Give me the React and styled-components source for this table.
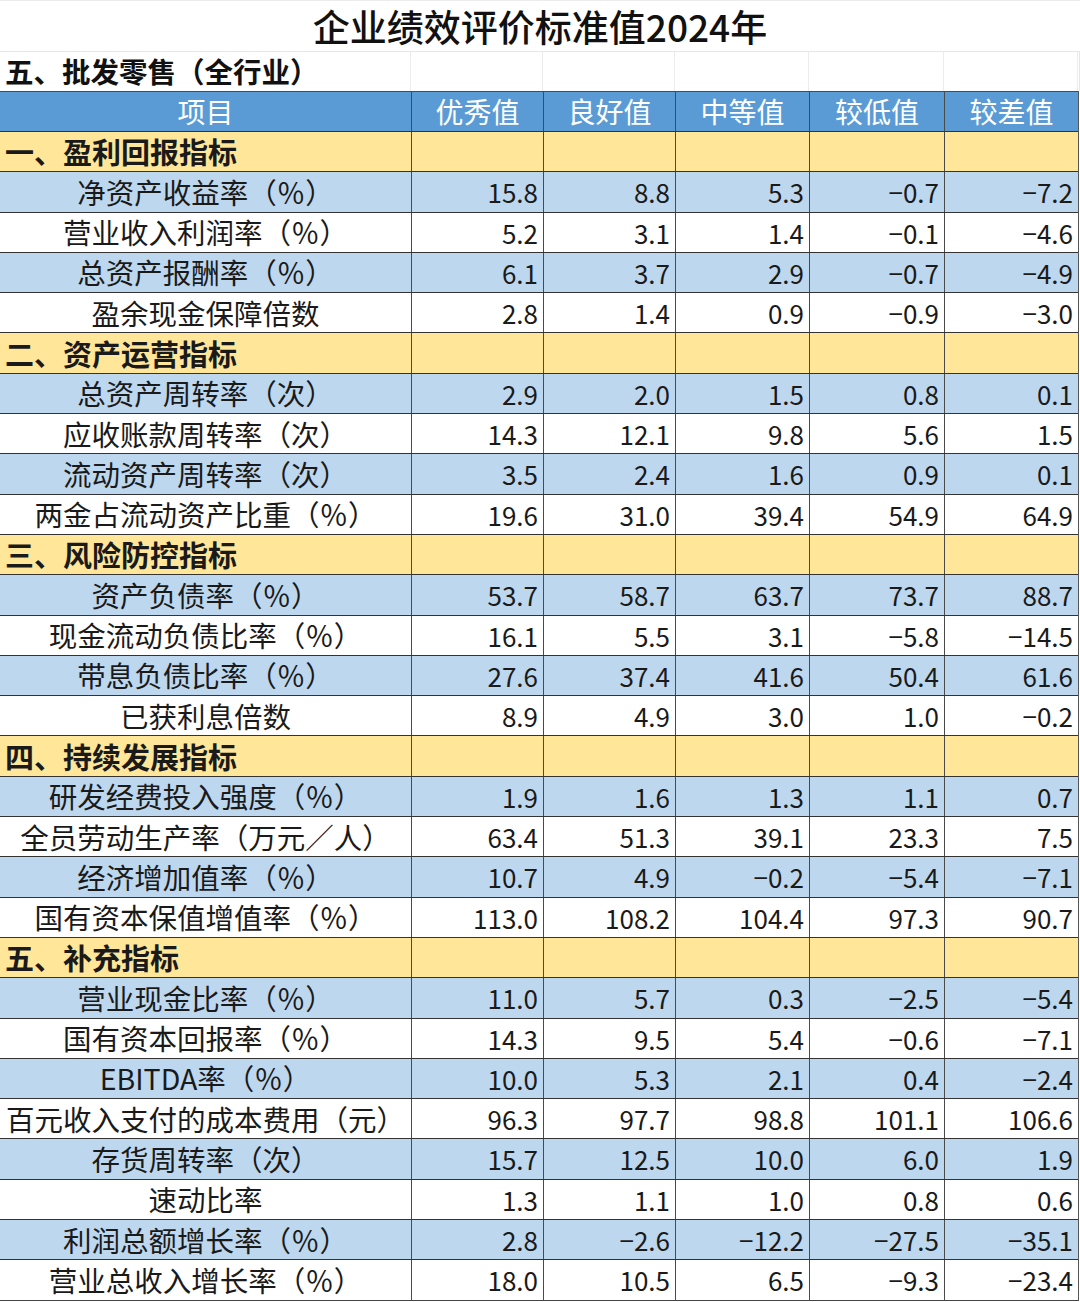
import React from "react";
import styled, { createGlobalStyle } from "styled-components";

const Global = createGlobalStyle`
  html, body { margin: 0; padding: 0; background: #ffffff; }
  body { font-family: "Noto Sans CJK SC", "Noto Sans", sans-serif; color: #111; }
`;

const COLS = "411px 132px 132px 134px 135px 134px";

const Sheet = styled.div`
  width: 1080px;
  display: flex;
  flex-direction: column;
`;

const TitleBar = styled.div`
  height: 52px;
  box-sizing: border-box;
  border-top: 1px solid #ececec;
  border-bottom: 1px solid #e6e6e6;
  display: flex;
  align-items: center;
  justify-content: center;
  font-size: 37px;
  line-height: 1.2;
  font-weight: 500;
  color: #111;
`;

const SubRow = styled.div`
  display: grid;
  grid-template-columns: ${COLS};
  height: 39px;
  box-sizing: border-box;
  border-right: 1px solid #e6e6e6;
`;

const SubCell = styled.div`
  box-sizing: border-box;
  border-right: 1px solid #ececec;
  display: flex;
  align-items: center;
  padding-left: 5px;
  font-size: 28.5px;
  line-height: 1.2;
  font-weight: 700;
  color: #111;
  white-space: nowrap;
`;

const Table = styled.div`
  width: 1078px;
  display: flex;
  flex-direction: column;
  border-left: 1px solid #333;
  border-right: 1px solid #555;
  border-bottom: 1px solid #444;
  box-sizing: content-box;
  margin-left: -1px;
`;

const bg = {
  head: "#5b9bd5",
  section: "#ffe699",
  blue: "#bdd7ee",
  white: "#ffffff",
};

const Row = styled.div`
  display: grid;
  grid-template-columns: ${COLS};
  height: ${(p) => (p.$kind === "head" ? "40px" : "40.31px")};
  box-sizing: border-box;
  border-top: 1px solid ${(p) => (p.$kind === "head" ? "#3c4d60" : "#333")};
  background: ${(p) => bg[p.$kind]};
`;

const Cell = styled.div`
  box-sizing: border-box;
  min-width: 0;
  border-left: ${(p) => (p.$first ? "none" : "1px solid #4a4a4a")};
  display: flex;
  align-items: center;
  white-space: nowrap;
  line-height: 1.2;
`;

const HeadCell = styled(Cell)`
  justify-content: center;
  color: #ffffff;
  font-size: 28px;
  font-weight: 400;
  padding-top: 1px;
`;

const SectionCell = styled(Cell)`
  justify-content: flex-start;
  padding-left: 5px;
  font-size: 29px;
  font-weight: 700;
  color: #1a1a1a;
`;

const LabelCell = styled(Cell)`
  justify-content: center;
  font-size: 28.5px;
  font-weight: 400;
  color: #1a1a1a;
`;

const NumCell = styled(Cell)`
  justify-content: flex-end;
  padding-right: 5px;
  font-size: 26px;
  font-weight: 400;
  color: #1a1a1a;
`;

const headers = ["项目", "优秀值", "良好值", "中等值", "较低值", "较差值"];

const sections = [
  {
    title: "一、盈利回报指标",
    rows: [
      ["净资产收益率（％）", "15.8", "8.8", "5.3", "−0.7", "−7.2"],
      ["营业收入利润率（％）", "5.2", "3.1", "1.4", "−0.1", "−4.6"],
      ["总资产报酬率（％）", "6.1", "3.7", "2.9", "−0.7", "−4.9"],
      ["盈余现金保障倍数", "2.8", "1.4", "0.9", "−0.9", "−3.0"],
    ],
  },
  {
    title: "二、资产运营指标",
    rows: [
      ["总资产周转率（次）", "2.9", "2.0", "1.5", "0.8", "0.1"],
      ["应收账款周转率（次）", "14.3", "12.1", "9.8", "5.6", "1.5"],
      ["流动资产周转率（次）", "3.5", "2.4", "1.6", "0.9", "0.1"],
      ["两金占流动资产比重（％）", "19.6", "31.0", "39.4", "54.9", "64.9"],
    ],
  },
  {
    title: "三、风险防控指标",
    rows: [
      ["资产负债率（％）", "53.7", "58.7", "63.7", "73.7", "88.7"],
      ["现金流动负债比率（％）", "16.1", "5.5", "3.1", "−5.8", "−14.5"],
      ["带息负债比率（％）", "27.6", "37.4", "41.6", "50.4", "61.6"],
      ["已获利息倍数", "8.9", "4.9", "3.0", "1.0", "−0.2"],
    ],
  },
  {
    title: "四、持续发展指标",
    rows: [
      ["研发经费投入强度（％）", "1.9", "1.6", "1.3", "1.1", "0.7"],
      ["全员劳动生产率（万元／人）", "63.4", "51.3", "39.1", "23.3", "7.5"],
      ["经济增加值率（％）", "10.7", "4.9", "−0.2", "−5.4", "−7.1"],
      ["国有资本保值增值率（％）", "113.0", "108.2", "104.4", "97.3", "90.7"],
    ],
  },
  {
    title: "五、补充指标",
    rows: [
      ["营业现金比率（％）", "11.0", "5.7", "0.3", "−2.5", "−5.4"],
      ["国有资本回报率（％）", "14.3", "9.5", "5.4", "−0.6", "−7.1"],
      ["EBITDA率（％）", "10.0", "5.3", "2.1", "0.4", "−2.4"],
      ["百元收入支付的成本费用（元）", "96.3", "97.7", "98.8", "101.1", "106.6"],
      ["存货周转率（次）", "15.7", "12.5", "10.0", "6.0", "1.9"],
      ["速动比率", "1.3", "1.1", "1.0", "0.8", "0.6"],
      ["利润总额增长率（％）", "2.8", "−2.6", "−12.2", "−27.5", "−35.1"],
      ["营业总收入增长率（％）", "18.0", "10.5", "6.5", "−9.3", "−23.4"],
    ],
  },
];

export default function App() {
  return (
    <>
      <Global />
      <Sheet>
        <TitleBar>企业绩效评价标准值2024年</TitleBar>
        <SubRow>
          <SubCell>五、批发零售（全行业）</SubCell>
          <SubCell />
          <SubCell />
          <SubCell />
          <SubCell />
          <SubCell />
        </SubRow>
        <Table>
          <Row $kind="head">
            {headers.map((h, i) => (
              <HeadCell key={h} $first={i === 0}>
                {h}
              </HeadCell>
            ))}
          </Row>
          {sections.map((s) => (
            <React.Fragment key={s.title}>
              <Row $kind="section">
                <SectionCell $first>{s.title}</SectionCell>
                {[0, 1, 2, 3, 4].map((k) => (
                  <SectionCell key={k} />
                ))}
              </Row>
              {s.rows.map((r, ri) => (
                <Row key={r[0]} $kind={ri % 2 === 0 ? "blue" : "white"}>
                  <LabelCell $first>{r[0]}</LabelCell>
                  {r.slice(1).map((v, vi) => (
                    <NumCell key={vi}>{v}</NumCell>
                  ))}
                </Row>
              ))}
            </React.Fragment>
          ))}
        </Table>
      </Sheet>
    </>
  );
}
